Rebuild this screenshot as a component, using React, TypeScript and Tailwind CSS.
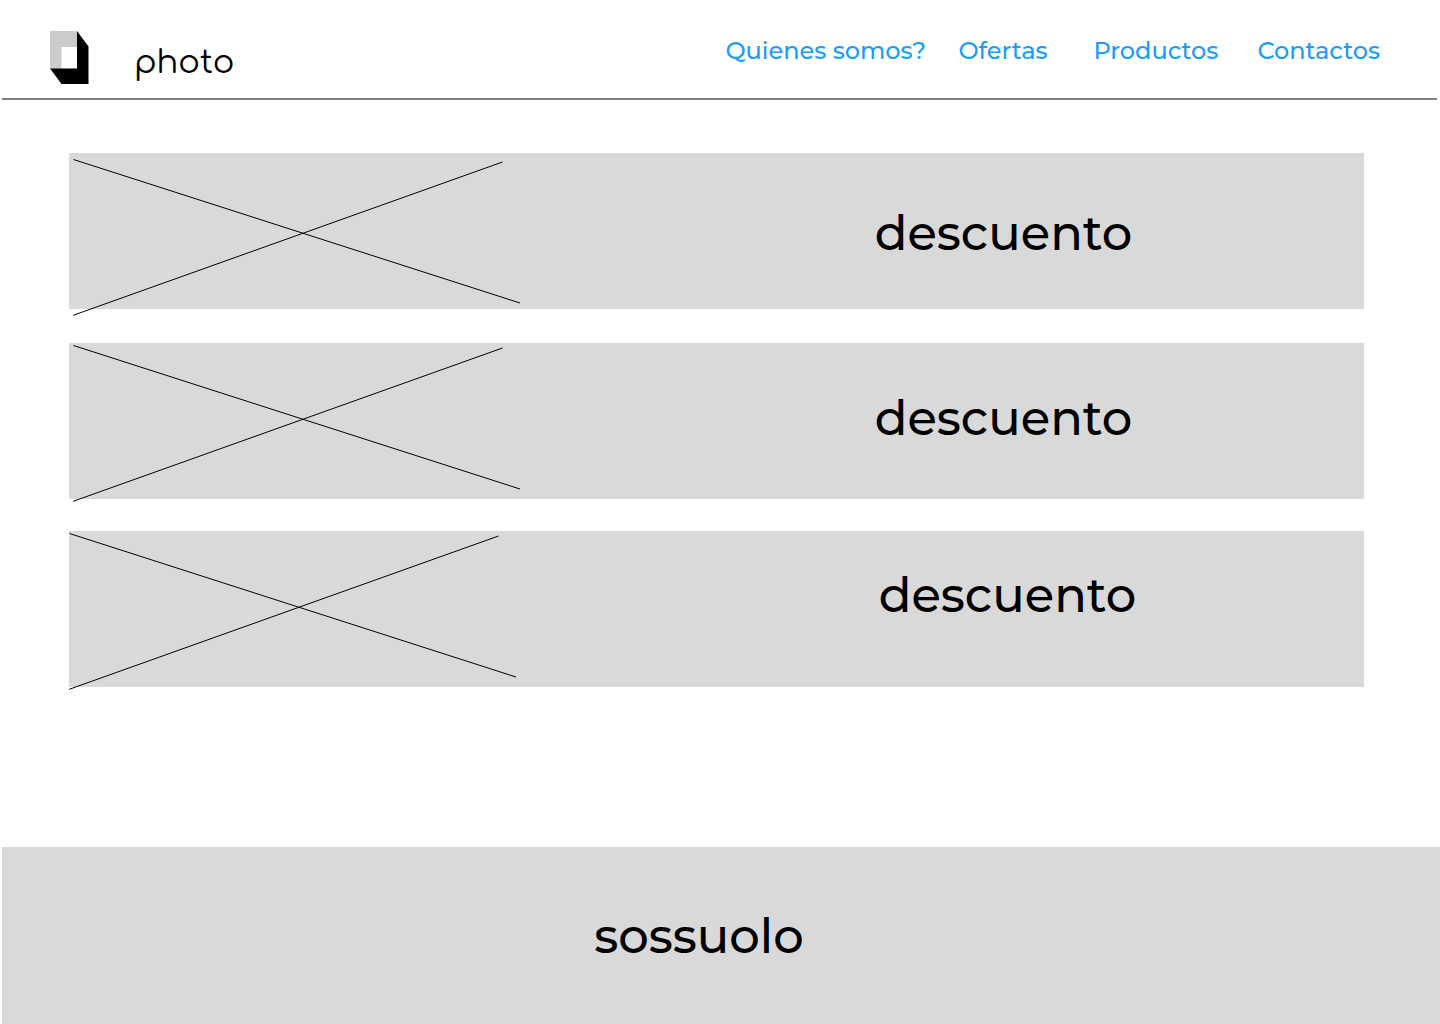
const links = [
  { label: "Quienes somos?", href: "#quienes-somos" },
  { label: "Ofertas", href: "#ofertas" },
  { label: "Productos", href: "#productos" },
  { label: "Contactos", href: "#contactos" },
];

const banners = [
  { id: 1, art: "pl-1 pt-1.5", text: "pb-0.5", gap: "mb-[34px]" },
  { id: 2, art: "pl-1 pt-0.5", text: "pb-2", gap: "mb-8" },
  { id: 3, art: "pt-0.5", text: "pl-2 pb-[30px]", gap: "" },
];

function Logo() {
  return (
    <svg width="39" height="53" viewBox="0 0 39 53" aria-hidden="true">
      <path d="M0 0H27V16H11.5V38H0Z" fill="#cbcbcb" />
      <path d="M27 0L38.5 15.5V53H11.5L0 37.5H27Z" fill="#000" />
    </svg>
  );
}

function Cross() {
  return (
    <svg className="overflow-visible" width="452" height="156" viewBox="0 0 452 156" aria-hidden="true">
      <path d="M0.5 0.5L447 144M0.2 156.3L429.5 3" stroke="#000" strokeWidth="1" fill="none" />
    </svg>
  );
}

export default function App() {
  return (
    <div className="flex min-h-screen flex-col bg-white font-['Montserrat','Inter',sans-serif] font-medium text-black">
      <header className="ml-0.5 mr-[3px] flex h-[100px] justify-between border-b-2 border-[#808080] pl-12 pr-[57px]">
        <a href="#inicio" className="flex items-start gap-[45px] pt-[31px]">
          <Logo />
          <span className="pt-2.5 font-['Comfortaa','Quicksand','Lato',sans-serif] text-[32px] leading-[44px] font-normal">photo</span>
        </a>
        <nav aria-label="Principal" className="grid grid-cols-[233px_135px_164px_auto] pt-9 text-2xl leading-[30px] text-[#1b9df8]">
          {links.map((link) => (
            <a key={link.href} href={link.href} className="whitespace-nowrap">
              {link.label}
            </a>
          ))}
        </nav>
      </header>

      <main className="flex-1 pr-[76px] pl-[69px] pt-[53px]">
        {banners.map((banner) => (
          <section key={banner.id} className={`grid h-[156px] grid-cols-[574px_1fr] bg-[#d9d9d9] ${banner.gap}`}>
            <div className={banner.art}>
              <Cross />
            </div>
            <h2 className={`flex items-center justify-center text-5xl ${banner.text}`}>descuento</h2>
          </section>
        ))}
      </main>

      <footer className="ml-0.5 flex h-[177px] items-center justify-center bg-[#d9d9d9] pr-11">
        <p className="text-5xl">sossuolo</p>
      </footer>
    </div>
  );
}
